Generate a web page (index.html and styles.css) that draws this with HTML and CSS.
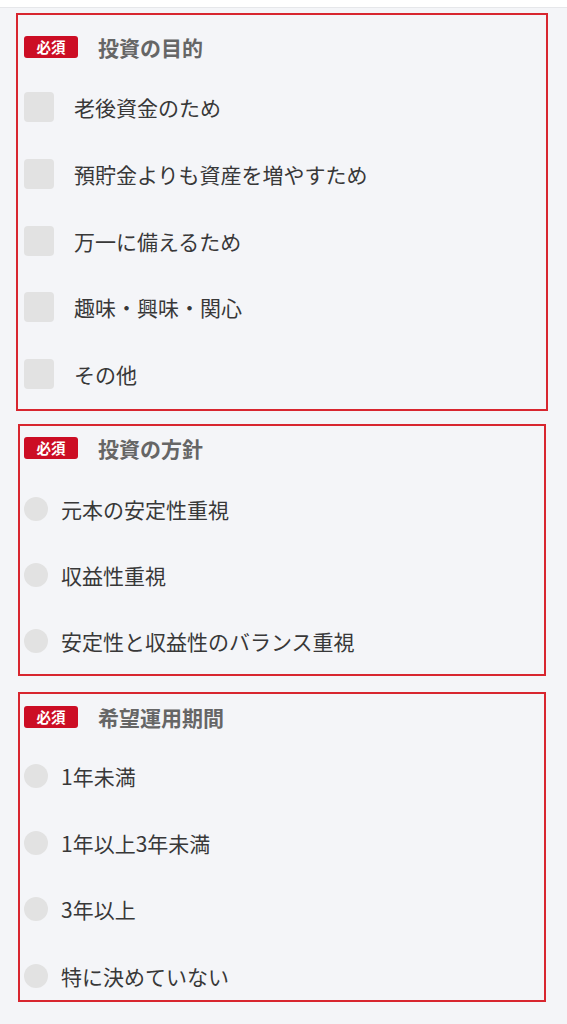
FILE: index.html
```html
<!DOCTYPE html>
<html lang="ja">
<head>
  <meta charset="UTF-8">
  <title>投資アンケート</title>
  <link rel="stylesheet" href="styles.css">
</head>

<body>
  <div class="topbar"></div>

  <!-- 投資の目的 (checkboxes) -->
  <div class="field field--purpose">
    <div class="field-head"><span class="badge">必須</span><span class="field-title">投資の目的</span></div>
    <ul class="options options--check">
      <li class="option"><span class="check"></span>老後資金のため</li>
      <li class="option"><span class="check"></span>預貯金よりも資産を増やすため</li>
      <li class="option"><span class="check"></span>万一に備えるため</li>
      <li class="option"><span class="check"></span>趣味・興味・関心</li>
      <li class="option"><span class="check"></span>その他</li>
    </ul>
  </div>

  <!-- 投資の方針 (radios) -->
  <div class="field field--policy">
    <div class="field-head"><span class="badge">必須</span><span class="field-title">投資の方針</span></div>
    <ul class="options options--radio">
      <li class="option"><span class="radio"></span>元本の安定性重視</li>
      <li class="option"><span class="radio"></span>収益性重視</li>
      <li class="option"><span class="radio"></span>安定性と収益性のバランス重視</li>
    </ul>
  </div>

  <!-- 希望運用期間 (radios) -->
  <div class="field field--period">
    <div class="field-head"><span class="badge">必須</span><span class="field-title">希望運用期間</span></div>
    <ul class="options options--radio">
      <li class="option"><span class="radio"></span>1年未満</li>
      <li class="option"><span class="radio"></span>1年以上3年未満</li>
      <li class="option"><span class="radio"></span>3年以上</li>
      <li class="option"><span class="radio"></span>特に決めていない</li>
    </ul>
  </div>
</body>
</html>
```

FILE: styles.css
```css
/*********
 * page  *
 *********/
body {
  margin: 0;
  background: #f4f5f8;
  font-family: "Noto Sans CJK JP", "Noto Sans", sans-serif;
  color: #383838;
}
.topbar {
  height: 7px;
  background: #fff;
  border-bottom: 1px solid #e6e7ea;
}

/*************************
 * field box (red frame) *
 *************************/
.field {
  border: 2px solid #d8262f;
  margin: 16px 21px 0 18px;
  padding: 11px 4px 18px;
}
/* each box sits a little differently in the screenshot */
.field--purpose { margin: 5px 19px 0 16px; padding: 20px 6px 20px; }
.field--policy  { margin-top: 13px; padding-top: 10px; }
.field--period  { padding-bottom: 9px; }

.field-head {
  display: flex;
  align-items: center;
  height: 24px;
}
.badge {
  display: inline-block;
  width: 54px;
  height: 22px;
  line-height: 22px;
  border-radius: 3px;
  background: #cc0d24;
  color: #fff;
  font-size: 14.5px;
  font-weight: 700;
  text-align: center;
}
.field-title {
  margin-left: 20px;
  font-size: 21px;
  font-weight: 700;
  color: #666;
}

/***********
 * options *
 ***********/
.options {
  list-style: none;
  margin: 33px 0 0;
  padding: 0;
  display: flex;
  flex-direction: column;
  gap: 36.75px;
}
.field--policy .options { margin-top: 34px; gap: 36px; }
.field--period .options { margin-top: 32px; gap: 36.7px; }

.option {
  display: flex;
  align-items: center;
  height: 30px;
  font-size: 21px;
  white-space: nowrap;
}
.check {
  width: 30px;
  height: 30px;
  border-radius: 4px;
  background: #e2e2e2;
  margin-right: 20px;
  flex: none;
}
.radio {
  width: 24px;
  height: 24px;
  border-radius: 50%;
  background: #e2e2e2;
  margin-right: 13px;
  flex: none;
}
```
